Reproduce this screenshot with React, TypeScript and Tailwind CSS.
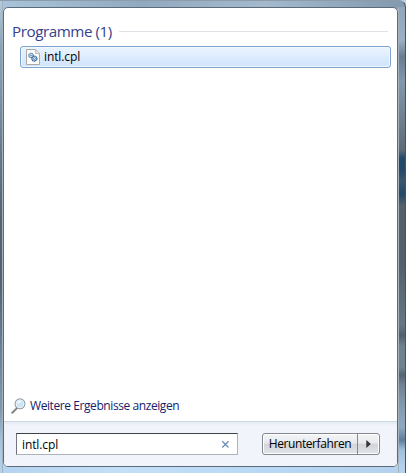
import { useState } from "react";

const programs = ["intl.cpl"];

function CplIcon() {
  return (
    <svg className="h-4 w-[14px] shrink-0" viewBox="0 0 14 16" fill="none">
      <path d="M.5.5h9.2l3.8 3.8v11.2H.5z" fill="#fcfcfa" stroke="#a9a9a5" />
      <path d="M9.5.8v3.7h3.7" fill="#e8e8e4" stroke="#b5b5b0" strokeWidth=".8" />
      <circle cx="5" cy="6.5" r="2.1" fill="#eef6fb" stroke="#4d7eae" strokeWidth="1.3" strokeDasharray="1.2 .35" />
      <circle cx="5" cy="6.5" r=".7" fill="#426c98" />
      <circle cx="8.4" cy="9.6" r="2.5" fill="#e6f1f9" stroke="#2f5f95" strokeWidth="1.3" strokeDasharray="1.3 .35" />
      <circle cx="8.4" cy="9.6" r="1" fill="#fff" stroke="#426c98" strokeWidth=".8" />
    </svg>
  );
}

function MagnifierIcon() {
  return (
    <svg className="h-4 w-[15px] shrink-0" viewBox="0 0 15 16" fill="none">
      <path d="M5.6 10.2 1.4 14.6" stroke="#777b80" strokeWidth="2.2" strokeLinecap="round" />
      <path d="M5 9.9 1.4 13.6" stroke="#c7c9cb" strokeWidth=".8" strokeLinecap="round" />
      <circle cx="9" cy="5.8" r="4.9" fill="#cce5f5" stroke="#929ba5" strokeWidth="1.1" />
      <circle cx="9" cy="5.8" r="3.9" stroke="#edf6fc" strokeWidth=".8" />
      <path d="M6 5.5C6.5 3.2 8.5 2.3 10.5 3 9.5 4.7 8 5.5 6 5.5Z" fill="#f5fbff" />
    </svg>
  );
}

export default function App() {
  const [query, setQuery] = useState("intl.cpl");

  return (
    <main className="h-[473px] w-[406px] overflow-hidden bg-[linear-gradient(90deg,#b5d3ef,#c4dff8_30%,#b8d8f5_65%,#b4d1ed)] font-['Open_Sans','Noto_Sans',sans-serif] text-black">
      <div className="flex h-full rounded-tr-[7px] border-t border-r border-t-[#8b9dad] border-r-[#435463] bg-[linear-gradient(90deg,#a9c4da,#91a9bf_35%,#a4b9cc_65%,#8299ae)] bg-[length:100%_8px] bg-no-repeat">
        <div className="w-[3px] shrink-0 border-r border-[#a3b2bf] bg-[linear-gradient(180deg,#b4cbdc_0,#8ba2b7_45px,#7f94a8_90px,#687a8a_150px,#56636f_220px,#536170_280px,#6d8195_350px,#8299af_410px,#a3c4df_440px,#b5d3ef_473px)]" />
        <section className="mt-[6px] flex h-[460px] w-[395px] shrink-0 flex-col overflow-hidden rounded-[5px] border border-[#5c6b79] bg-white">
          <div className="flex h-[413px] flex-col">
            <header className="flex h-[38px] items-center pt-[8px] pl-[8px]">
              <h1 className="w-[101px] text-[15.2px] leading-5 tracking-[-0.44px] whitespace-nowrap text-[#35418a]">Programme (1)</h1>
              <div className="ml-[6px] h-px w-[269px] bg-[#dfe3e8]" />
            </header>
            <ul>
              {programs.map((name) => (
                <li
                  key={name}
                  className="ml-[16px] flex h-[22px] w-[371px] items-center rounded-[3px] border border-[#7da2ce] bg-gradient-to-b from-[#ebf4fe] to-[#cfe4fe] pl-[5px] shadow-[inset_0_0_0_1px_#f0f7ff]"
                >
                  <CplIcon />
                  <span className="ml-[4px] text-xs leading-4 tracking-[-0.1px]">{name}</span>
                </li>
              ))}
            </ul>
            <button className="mt-auto mb-[7px] ml-[7px] flex items-center text-left text-[#151c6a]">
              <MagnifierIcon />
              <span className="ml-[4px] text-xs leading-4 tracking-[-0.42px] whitespace-nowrap">Weitere Ergebnisse anzeigen</span>
            </button>
          </div>
          <footer className="flex h-[45px] items-start border-t border-[#cad8e5] bg-[#f1f4fb] pt-[11px] pl-[12px] shadow-[inset_0_2px_2px_#e5ecf5]">
            <div className="flex h-[22px] w-[222px] items-center border border-[#aeb3ba] border-t-[#3f4247] border-l-[#70757c] bg-white pl-[5px]">
              <input
                aria-label="Suche"
                value={query}
                onChange={(e) => setQuery(e.target.value)}
                className="h-[18px] w-[199px] text-xs tracking-[-0.1px] outline-none"
              />
              <button aria-label="Leeren" onClick={() => setQuery("")}>
                <svg className="h-[9px] w-[9px]" viewBox="0 0 9 9" fill="none">
                  <path d="m1.3 1.3 6.2 6.2m0-6.2L1.3 7.5" stroke="#6b91b8" strokeWidth="1.3" />
                </svg>
              </button>
            </div>
            <div className="ml-[24px] flex h-[22px] w-[118px] overflow-hidden rounded-[3px] border border-[#85898f] bg-[linear-gradient(180deg,#f4f5f7_0%,#e7e9ec_46%,#d2d4d8_50%,#e1e4e8_100%)] shadow-[inset_0_0_0_1px_#fff]">
              <button className="w-[95px] border-r border-[#85898f] text-xs leading-4 tracking-[-0.4px] whitespace-nowrap">Herunterfahren</button>
              <button aria-label="Weitere Optionen" className="flex flex-1 items-center justify-center">
                <svg className="h-[8px] w-[5px]" viewBox="0 0 5 8">
                  <path d="m.3 0 4.5 4-4.5 4z" fill="#303238" />
                </svg>
              </button>
            </div>
          </footer>
        </section>
        <div className="mt-[6px] h-[467px] flex-1 border-l border-[#a5b3bf] bg-[linear-gradient(180deg,#8fa6bb_0,#9bb0c3_33px,#687d90_50px,#8298ac_75px,#5d6b77_143px,#244968_151px,#244968_163px,#3c566c_174px,#244968_187px,#53616c_199px,#52616d_260px,#657784_318px,#4f606e_328px,#6e818f_339px,#6f8391_360px,#536575_368px,#6e8292_378px,#8097ab_395px,#8fa9c1_420px,#5d7c9a_433px,#a0c0dc_443px,#b4d1ed_460px)]" />
      </div>
    </main>
  );
}
